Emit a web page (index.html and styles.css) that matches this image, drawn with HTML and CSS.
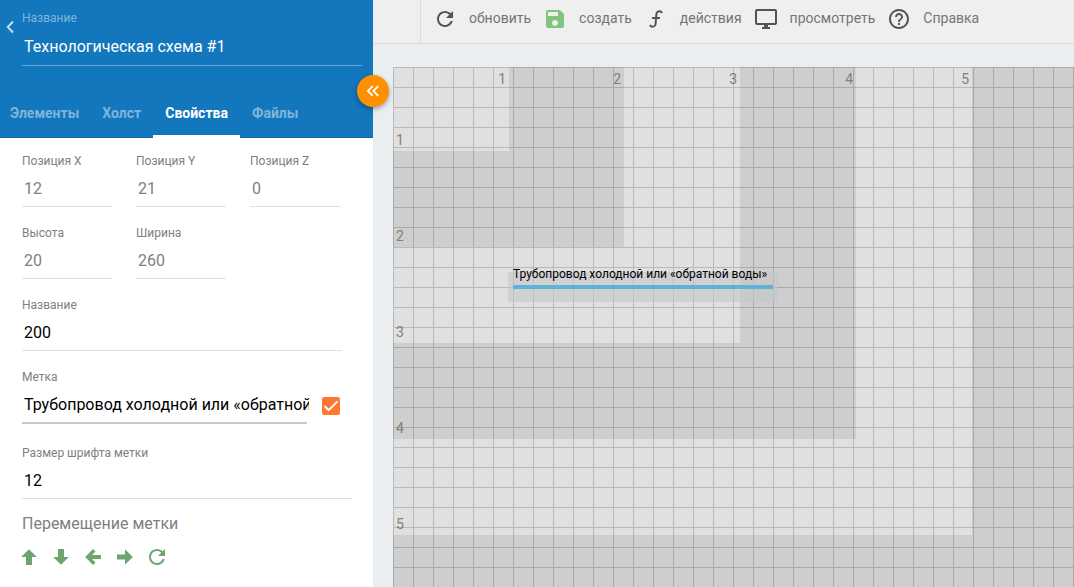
FILE: index.html
```html
<!DOCTYPE html>
<html lang="ru">
<head>
<meta charset="utf-8">
<meta name="viewport" content="width=device-width, initial-scale=1">
<title>Технологическая схема #1</title>
<link rel="stylesheet" href="styles.css">
</head>
<body>
<div class="app">
  <aside class="sidebar">
    <header class="sidebar-header">
      <div class="title-row">
        <button class="back" type="button" aria-label="Назад">
          <svg class="icon-back" viewBox="0 0 8 14"><path d="M7 1.5L1.8 7L7 12.5" fill="none" stroke="currentColor" stroke-width="2"/></svg>
        </button>
        <div class="field field-title">
          <label for="scheme-name">Название</label>
          <div class="control"><input id="scheme-name" type="text" value="Технологическая схема #1"></div>
        </div>
      </div>
      <nav class="tabs">
        <button class="tab" type="button">Элементы</button>
        <button class="tab" type="button">Холст</button>
        <button class="tab tab-active" type="button">Свойства</button>
        <button class="tab" type="button">Файлы</button>
      </nav>
      <button class="collapse" type="button" aria-label="Свернуть панель">
        <svg class="icon-collapse" viewBox="0 0 24 24"><path fill="currentColor" d="M18.41,7.41L17,6L11,12L17,18L18.41,16.59L13.83,12L18.41,7.41M12.41,7.41L11,6L5,12L11,18L12.41,16.59L7.83,12L12.41,7.41Z"/></svg>
      </button>
    </header>

    <form class="properties">
      <div class="row">
        <div class="field field-small"><label for="pos-x">Позиция X</label><div class="control"><input id="pos-x" type="text" value="12" disabled></div></div>
        <div class="field field-small"><label for="pos-y">Позиция Y</label><div class="control"><input id="pos-y" type="text" value="21" disabled></div></div>
        <div class="field field-small"><label for="pos-z">Позиция Z</label><div class="control"><input id="pos-z" type="text" value="0" disabled></div></div>
      </div>
      <div class="row">
        <div class="field field-small"><label for="height">Высота</label><div class="control"><input id="height" type="text" value="20" disabled></div></div>
        <div class="field field-small"><label for="width">Ширина</label><div class="control"><input id="width" type="text" value="260" disabled></div></div>
      </div>
      <div class="row row-name">
        <div class="field field-wide"><label for="name">Название</label><div class="control"><input id="name" type="text" value="200"></div></div>
      </div>
      <div class="row row-mark">
        <div class="field field-wide field-mark"><label for="mark">Метка</label><div class="control"><input id="mark" type="text" value="Трубопровод холодной или «обратной воды»"></div></div>
        <input class="check" type="checkbox" checked aria-label="Показывать метку">
      </div>
      <div class="row">
        <div class="field field-wide"><label for="mark-size">Размер шрифта метки</label><div class="control"><input id="mark-size" type="text" value="12"></div></div>
      </div>
      <h2 class="section-title">Перемещение метки</h2>
      <div class="moves">
        <button type="button" aria-label="Вверх"><svg class="icon" viewBox="0 0 24 24"><path fill="currentColor" d="M15,20H9V12H4.16L12,4.16L19.84,12H15V20Z"/></svg></button>
        <button type="button" aria-label="Вниз"><svg class="icon" viewBox="0 0 24 24"><path fill="currentColor" d="M9,4H15V12H19.84L12,19.84L4.16,12H9V4Z"/></svg></button>
        <button type="button" aria-label="Влево"><svg class="icon" viewBox="0 0 24 24"><path fill="currentColor" d="M20,10V14H11L14.5,17.5L12.08,19.92L4.16,12L12.08,4.08L14.5,6.5L11,10H20Z"/></svg></button>
        <button type="button" aria-label="Вправо"><svg class="icon" viewBox="0 0 24 24"><path fill="currentColor" d="M4,14.5V9.5H12V4.16L19.84,12L12,19.84V14.5H4Z"/></svg></button>
        <button type="button" aria-label="Сбросить"><svg class="icon" viewBox="0 0 24 24"><path fill="currentColor" d="M17.65 6.35C16.2 4.9 14.21 4 12 4c-4.42 0-7.99 3.58-7.99 8s3.57 8 7.99 8c3.73 0 6.84-2.55 7.73-6h-2.08c-.82 2.33-3.04 4-5.65 4-3.31 0-6-2.69-6-6s2.69-6 6-6c1.66 0 3.14.69 4.22 1.78L13 11h7V4l-2.35 2.35z"/></svg></button>
      </div>
    </form>
  </aside>

  <main class="workspace">
    <div class="toolbar-wrap">
      <div class="toolbar">
        <button class="tool" type="button"><svg class="icon" viewBox="0 0 24 24"><path fill="currentColor" d="M17.65 6.35C16.2 4.9 14.21 4 12 4c-4.42 0-7.99 3.58-7.99 8s3.57 8 7.99 8c3.73 0 6.84-2.55 7.73-6h-2.08c-.82 2.33-3.04 4-5.65 4-3.31 0-6-2.69-6-6s2.69-6 6-6c1.66 0 3.14.69 4.22 1.78L13 11h7V4l-2.35 2.35z"/></svg><span>обновить</span></button>
        <button class="tool" type="button"><svg class="icon icon-save" viewBox="0 0 24 24"><path fill="currentColor" d="M17 3H5c-1.11 0-2 .9-2 2v14c0 1.1.89 2 2 2h14c1.1 0 2-.9 2-2V7l-4-4zm-5 16c-1.66 0-3-1.34-3-3s1.34-3 3-3 3 1.34 3 3-1.34 3-3 3zm3-10H5V5h10v4z"/></svg><span>создать</span></button>
        <button class="tool" type="button"><svg class="icon" viewBox="0 0 24 24"><path fill="currentColor" d="M15.6,5.29C14.5,5.19 13.53,6 13.43,7.11L13.18,10H16V12H13L12.56,17.07C12.37,19.27 10.43,20.9 8.23,20.7C6.92,20.59 5.82,19.86 5.17,18.83L6.67,17.33C6.91,18.07 7.57,18.64 8.4,18.71C9.5,18.81 10.47,18 10.57,16.89L11,12H8V10H11.17L11.44,6.93C11.63,4.73 13.57,3.1 15.77,3.3C17.08,3.41 18.18,4.14 18.83,5.17L17.33,6.67C17.09,5.93 16.43,5.36 15.6,5.29Z"/></svg><span>действия</span></button>
        <button class="tool" type="button"><svg class="icon" viewBox="0 0 24 24"><path fill="currentColor" d="M21 2H3c-1.1 0-2 .9-2 2v12c0 1.1.9 2 2 2h7v2H8v2h8v-2h-2v-2h7c1.1 0 2-.9 2-2V4c0-1.1-.9-2-2-2zm0 14H3V4h18v12z"/></svg><span>просмотреть</span></button>
        <button class="tool" type="button"><svg class="icon" viewBox="0 0 24 24"><path fill="currentColor" d="M11 18h2v-2h-2v2zm1-16C6.48 2 2 6.48 2 12s4.48 10 10 10 10-4.48 10-10S17.52 2 12 2zm0 18c-4.41 0-8-3.59-8-8s3.59-8 8-8 8 3.59 8 8-3.59 8-8 8zm0-14c-2.21 0-4 1.79-4 4h2c0-1.1.9-2 2-2s2 .9 2 2c0 2-3 1.75-3 5h2c0-2.25 3-2.5 3-5 0-2.21-1.79-4-4-4z"/></svg><span>Справка</span></button>
      </div>
    </div>
    <div class="canvas">
      <div class="zone zone-5"><span class="zone-x">5</span><span>5</span></div>
      <div class="zone zone-4"><span class="zone-x">4</span><span>4</span></div>
      <div class="zone zone-3"><span class="zone-x">3</span><span>3</span></div>
      <div class="zone zone-2"><span class="zone-x">2</span><span>2</span></div>
      <div class="zone zone-1"><span class="zone-x">1</span><span>1</span></div>
      <div class="grid-lines"></div>
      <div class="pipe">
        <span class="pipe-label">Трубопровод холодной или «обратной воды»</span>
        <div class="pipe-line"></div>
      </div>
    </div>
  </main>
</div>
</body>
</html>
```

FILE: styles.css
```css
* {
  box-sizing: border-box;
}

body {
  margin: 0;
  font-family: Roboto, "Noto Sans", sans-serif;
  color: #808080;
  background: #eaeef1;
}

button,
input {
  margin: 0;
  padding: 0;
  border: 0;
  background: none;
  color: inherit;
  font-family: inherit;
}

button {
  cursor: pointer;
}

svg {
  display: block;
}

.icon {
  width: 24px;
  height: 24px;
  flex: none;
}

.app {
  display: grid;
  grid-template-columns: 373px minmax(0, 1fr);
  height: 100vh;
  overflow: hidden;
}

/* Sidebar */
.sidebar {
  position: relative;
  z-index: 1;
  background: #fff;
}

.sidebar-header {
  position: relative;
  background: #1277bc;
  color: #fff;
}

.title-row {
  display: flex;
  padding: 10px 11px 22px 6px;
}

.back {
  flex: none;
  width: 16px;
  height: 34px;
  color: #c4dff1;
}

.icon-back {
  width: 8px;
  height: 14px;
}

.collapse {
  position: absolute;
  right: -16px;
  top: 75px;
  display: grid;
  place-items: center;
  width: 32px;
  height: 32px;
  border-radius: 50%;
  background: #ff9100;
  color: #fff;
  box-shadow: 0 2px 5px rgba(0, 0, 0, 0.35);
}

.icon-collapse {
  width: 22px;
  height: 22px;
}

.tabs {
  display: flex;
  padding-right: 12px;
  box-shadow: inset 0 -1px 0 #106ba9;
}

.tab {
  height: 50px;
  padding: 2px 12px 0;
  border-bottom: 3px solid transparent;
  color: #7fb5db;
  font-size: 14px;
  font-weight: 700;
}

.tab:first-child {
  padding-left: 10px;
  padding-right: 11px;
}

.tab-active {
  border-bottom-color: #fff;
  color: #fff;
}

/* Fields */
.field label {
  display: block;
  font-size: 12px;
  line-height: 16px;
}

.control {
  padding-top: 1px;
  border-bottom: 1px solid #dedede;
}

.control input {
  display: block;
  box-sizing: content-box;
  width: 100%;
  height: 36px;
  padding: 0 2px;
  color: #000;
  font-size: 16px;
}

.control input:disabled {
  color: #808080;
}

.field-small {
  width: 90px;
}

.field-wide {
  flex: 1;
  min-width: 0;
}

.field-title {
  flex: 1;
  min-width: 0;
}

.field-title label {
  color: #80b6dc;
}

.field-title .control {
  padding: 2px 0 1px;
  border-color: #68a8d6;
}

.field-title .control input {
  color: #fff;
}

.properties {
  display: flex;
  flex-direction: column;
  gap: 18px;
  padding: 15px 21px 0 22px;
}

.row {
  display: flex;
  gap: 24px;
}

.row-name {
  padding-right: 10px;
}

.row-mark {
  align-items: flex-end;
  gap: 15px;
  padding: 0 12px 3px 0;
}

.field-mark .control {
  border-bottom: 2px solid #c8c8c8;
}

.check {
  appearance: none;
  flex: none;
  width: 18px;
  height: 18px;
  margin-bottom: 9px;
  border: 1px solid #ff7733;
  border-radius: 2px;
}

.check:checked {
  background: #ff7733 url("data:image/svg+xml,%3Csvg xmlns='http://www.w3.org/2000/svg' viewBox='0 0 16 16'%3E%3Cpath d='M1.5 8L5.7 12.2L14.5 3.4' fill='none' stroke='white' stroke-width='2'/%3E%3C/svg%3E") center / 16px 16px no-repeat;
}

.section-title {
  margin: -3px 0 0;
  font-size: 16px;
  font-weight: 400;
  line-height: 20px;
}

.moves {
  display: flex;
  gap: 8px;
  margin: -7px 0 0 -5px;
  color: #6da56f;
}

/* Toolbar */
.workspace {
  display: flex;
  flex-direction: column;
  min-width: 0;
}

.toolbar-wrap {
  padding-left: 47px;
  border-bottom: 1px solid #dcdcdc;
  background: #efefef;
}

.toolbar {
  display: flex;
  align-items: flex-start;
  gap: 12px;
  height: 43px;
  padding: 7px 12px 0;
  border-left: 1px solid #dcdcdc;
}

.tool {
  display: flex;
  gap: 12px;
  color: #545454;
  font-size: 14px;
  line-height: 22px;
  white-space: nowrap;
}

.tool span {
  color: #757575;
}

.icon-save {
  color: #7fc580;
}

/* Canvas */
.canvas {
  position: relative;
  flex: 1;
  margin: 23px 0 0 20px;
  overflow: hidden;
  background: #cecece;
}

.grid-lines {
  position: absolute;
  inset: 0;
  opacity: 0.17;
  background-image:
    linear-gradient(#000 1px, transparent 1px),
    linear-gradient(90deg, #000 1px, transparent 1px);
  background-size: 20px 20px;
}

.zone {
  position: absolute;
  left: 0;
  top: 0;
  display: flex;
  flex-direction: column;
  justify-content: space-between;
  padding: 2px 3px 1px;
  background: #e0e0e0;
  font-size: 14px;
  line-height: 20px;
}

.zone-x {
  align-self: flex-end;
}

.zone-1 {
  width: 116px;
  height: 84px;
}

.zone-2 {
  width: 231px;
  height: 180px;
  background: #cecece;
}

.zone-3 {
  width: 347px;
  height: 276px;
}

.zone-4 {
  width: 463px;
  height: 372px;
  background: #cecece;
}

.zone-5 {
  width: 579px;
  height: 468px;
}

.pipe {
  position: absolute;
  left: 115px;
  top: 205px;
  width: 270px;
  height: 30px;
  padding: 13px 5px;
  background: rgba(196, 199, 202, 0.6);
}

.pipe-label {
  position: absolute;
  left: 5px;
  top: -6px;
  color: #000;
  font-size: 12px;
  line-height: 16px;
  white-space: nowrap;
}

.pipe-line {
  height: 4px;
  background: #62b1d8;
}
```
